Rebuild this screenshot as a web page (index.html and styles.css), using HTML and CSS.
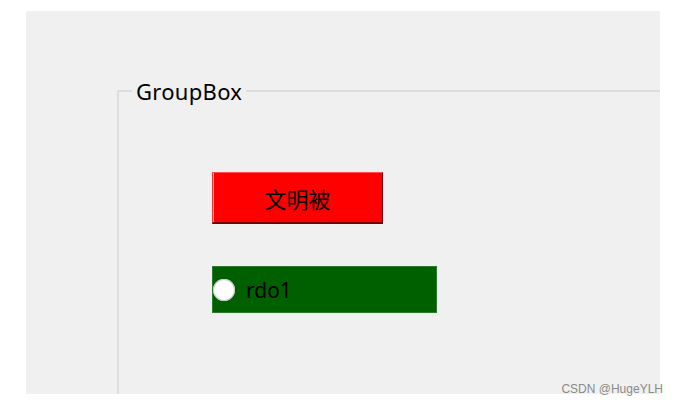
FILE: index.html
```html
<!DOCTYPE html>
<html lang="zh">
<head>
<meta charset="utf-8">
<title>GroupBox</title>
<link rel="stylesheet" href="styles.css">
</head>
<body>
<div class="page">
  <div class="panel">
    <fieldset class="groupbox">
      <legend class="groupbox-title">GroupBox</legend>
      <div class="controls">
        <button class="red-button" type="button">文明被</button>
        <label class="radio-row">
          <span class="radio-dot"></span>
          <span class="radio-label">rdo1</span>
        </label>
      </div>
    </fieldset>
  </div>
  <div class="watermark">CSDN @HugeYLH</div>
</div>
</body>
</html>
```

FILE: styles.css
```css
html, body {
  margin: 0;
  padding: 0;
  background: #ffffff;
}

.page {
  position: relative;
  width: 678px;
  height: 405px;
  padding: 11px 0 0 26px;
  box-sizing: border-box;
}

.panel {
  width: 634px;
  height: 383px;
  background: #f0f0f0;
  overflow: hidden;
  padding: 67px 0 0 91px;
  box-sizing: border-box;
}

.groupbox {
  margin: 0;
  width: 700px;
  height: 400px;
  border: 2px solid #dedede;
  border-right: none;
  border-bottom: none;
  padding: 0 0 0 13px;
  box-sizing: border-box;
  font-family: "Noto Sans", "Open Sans", sans-serif;
}

.groupbox-title {
  padding: 0 4px;
  font-size: 22px;
  letter-spacing: 0.3px;
  line-height: 26px;
  color: #000000;
}

.controls {
  display: flex;
  flex-direction: column;
  align-items: flex-start;
  gap: 42px;
  padding: 68px 0 0 80px;
}

.red-button {
  width: 171px;
  height: 52px;
  margin: 0;
  padding: 0;
  background: #ff0000;
  border-style: solid;
  border-width: 1px 1px 2px 1px;
  border-color: #ff5050 #700000 #700000 #ff3030;
  box-shadow: inset 1px 0 0 #ffb0b0;
  font-family: "Noto Sans CJK SC", sans-serif;
  font-size: 22px;
  color: #000000;
  line-height: 1;
}

.radio-row {
  display: flex;
  align-items: center;
  width: 225px;
  height: 47px;
  background: #006000;
  box-shadow: inset 0 0 0 1px #2c7a2c;
  box-sizing: border-box;
  padding-left: 1px;
  gap: 11px;
}

.radio-dot {
  width: 22px;
  height: 22px;
  border-radius: 50%;
  background: #ffffff;
  box-shadow: 0 0 0 1px #c8c8c8 inset;
  flex: none;
}

.radio-label {
  font-family: "Noto Sans", "Open Sans", sans-serif;
  font-size: 21px;
  color: #000000;
}

.watermark {
  position: absolute;
  right: 15px;
  bottom: 8px;
  font-family: "Liberation Sans", Arial, sans-serif;
  font-size: 12px;
  line-height: 15px;
  color: #8a8a8a;
}
```
